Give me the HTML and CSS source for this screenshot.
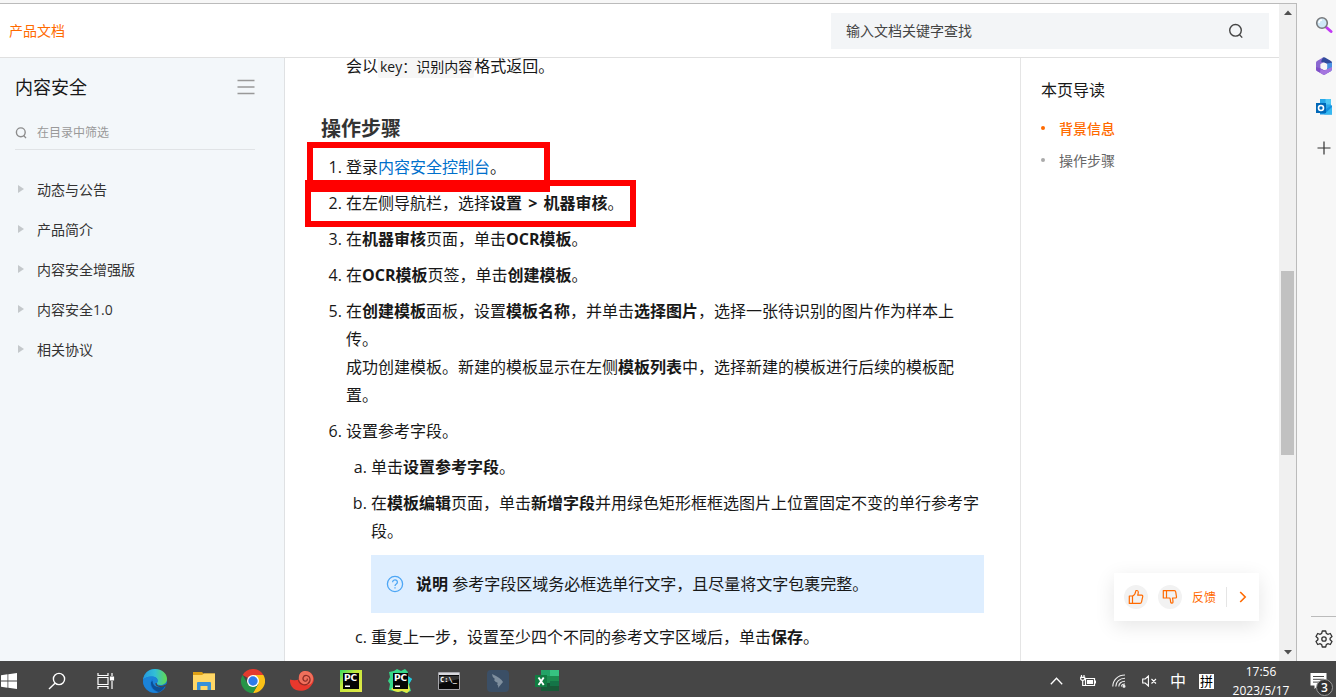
FILE: index.html
```html
<!DOCTYPE html>
<html lang="zh-CN">
<head>
<meta charset="utf-8">
<meta name="viewport" content="width=device-width, initial-scale=1">
<title>产品文档</title>
<link rel="stylesheet" href="styles.css">
</head>
<body>
<div class="browser">
  <div class="window">
    <div class="site">
      <header class="topbar">
        <a class="brand" href="#">产品文档</a>
        <form class="search">
          <input class="search-input" type="text" placeholder="输入文档关键字查找" aria-label="输入文档关键字查找">
          <button class="icon-btn" type="button" aria-label="搜索">
            <svg width="16" height="16" viewBox="0 0 16 16" fill="none" stroke="#444" stroke-width="1.4"><circle cx="7.5" cy="7.3" r="5.8"/><path d="M11.5 11.6l2.7 3"/></svg>
          </button>
        </form>
      </header>
      <div class="columns">
        <nav class="sidebar">
          <div class="side-head">
            <h2 class="side-title">内容安全</h2>
            <button class="icon-btn" type="button" aria-label="收起目录">
              <svg width="18" height="16" viewBox="0 0 18 16" fill="none" stroke="#999" stroke-width="1.6"><path d="M.5 1.500h17M.5 8h17M.5 14.500h17"/></svg>
            </button>
          </div>
          <label class="filter">
            <svg width="12" height="12" viewBox="0 0 12 12" fill="none" stroke="#8c8c8c" stroke-width="1.400"><circle cx="5.800" cy="5.300" r="4.400"/><path d="M8.800 8.600l2.200 2.500"/></svg>
            <input class="filter-input" type="text" placeholder="在目录中筛选" aria-label="在目录中筛选">
          </label>
          <ul class="menu">
            <li><a class="menu-link" href="#">动态与公告</a></li>
            <li><a class="menu-link" href="#">产品简介</a></li>
            <li><a class="menu-link" href="#">内容安全增强版</a></li>
            <li><a class="menu-link" href="#">内容安全1.0</a></li>
            <li><a class="menu-link" href="#">相关协议</a></li>
          </ul>
        </nav>
        <main class="article">
          <p class="lead">会以<code class="code">key：识别内容</code>格式返回。</p>
          <h2 class="heading">操作步骤</h2>
          <ol class="steps">
            <li class="marked">登录<a class="link" href="#">内容安全控制台</a>。<span class="frame frame-first"></span></li>
            <li class="marked">在左侧导航栏，选择<b>设置</b> <b class="then">&gt;</b> <b>机器审核</b>。<span class="frame frame-second"></span></li>
            <li>在<b>机器审核</b>页面，单击<b>OCR模板</b>。</li>
            <li>在<b>OCR模板</b>页签，单击<b>创建模板</b>。</li>
            <li>在<b>创建模板</b>面板，设置<b>模板名称</b>，并单击<b>选择图片</b>，选择一张待识别的图片作为样本上传。<br>成功创建模板。新建的模板显示在左侧<b>模板列表</b>中，选择新建的模板进行后续的模板配置。</li>
            <li>设置参考字段。
              <ol class="substeps">
                <li>单击<b>设置参考字段</b>。</li>
                <li>在<b>模板编辑</b>页面，单击<b>新增字段</b>并用绿色矩形框框选图片上位置固定不变的单行参考字段。
                  <div class="note">
                    <svg width="18" height="18" viewBox="0 0 18 18" fill="none" stroke="#4da6f5" stroke-width="1.300"><circle cx="9" cy="9" r="7.600"/><path d="M6.600 7.200a2.400 2.200 0 1 1 3.700 1.800c-.9.600-1.300.9-1.300 1.900M9 12.200v1.300"/></svg>
                    <p class="note-text"><b>说明</b> 参考字段区域务必框选单行文字，且尽量将文字包裹完整。</p>
                  </div>
                </li>
                <li>重复上一步，设置至少四个不同的参考文字区域后，单击<b>保存</b>。</li>
              </ol>
            </li>
          </ol>
        </main>
        <aside class="toc">
          <h3 class="toc-title">本页导读</h3>
          <ul class="toc-list">
            <li><a class="toc-link current" href="#">背景信息</a></li>
            <li><a class="toc-link" href="#">操作步骤</a></li>
          </ul>
        </aside>
      </div>
      <div class="feedback">
        <button class="round" type="button" aria-label="赞">
          <svg width="16" height="16" viewBox="0 0 16 16" fill="none" stroke="#ff6a00" stroke-width="1.200" stroke-linejoin="round"><path d="M1.300 7h3.200v7.400H1.300zM4.500 7.300c2-1 3-3 3.200-5 .1-1.200 2.600-1.200 2.600 1 0 1-.3 2-.6 2.900h4c.8 0 1.200.6 1 1.400l-1.200 5.600c-.2.800-.7 1.200-1.500 1.200H4.500"/></svg>
        </button>
        <button class="round" type="button" aria-label="踩">
          <svg width="16" height="16" viewBox="0 0 16 16" fill="none" stroke="#ff6a00" stroke-width="1.200" stroke-linejoin="round"><path d="M1.300 9h3.200V1.600H1.300zM4.500 9h3.300c.9 1.500.5 3 .9 4.300.4 1.400 2.300 1.100 2.300-.4 0-1.400-.2-2.300-.5-3.900h3c.7 0 1.100-.5 1-1.200l-.8-5c-.1-.8-.6-1.200-1.300-1.200H4.500"/></svg>
        </button>
        <a class="feedback-link" href="#">反馈</a>
        <button class="icon-btn divided" type="button" aria-label="展开">
          <svg width="8" height="12" viewBox="0 0 8 12" fill="none" stroke="#ff6a00" stroke-width="1.600"><path d="M1.200 1l5 5-5 5"/></svg>
        </button>
      </div>
    </div>
    <div class="scrollbar">
      <div class="arrow"><svg width="8" height="5" viewBox="0 0 8 5"><path d="M0 5L4 .5 8 5z" fill="#505050"/></svg></div>
      <div class="before"></div><div class="thumb"></div><div class="after"></div>
      <div class="arrow"><svg width="8" height="5" viewBox="0 0 8 5"><path d="M0 0l4 4.500L8 0z" fill="#505050"/></svg></div>
    </div>
  </div>
  <div class="rail">
    <button class="icon-btn" type="button" aria-label="搜索">
      <svg width="18" height="18" viewBox="0 0 18 18"><path d="M11.500 11.500l4.500 4" stroke="#c239f5" stroke-width="3" stroke-linecap="round"/><circle cx="7" cy="7" r="5.300" fill="#cfe8f7" stroke="#77797c" stroke-width="1.600"/><path d="M4 7a3 3 0 0 1 3-3" stroke="#fff" stroke-width="1.500" fill="none"/></svg>
    </button>
    <button class="icon-btn" type="button" aria-label="Microsoft 365">
      <svg width="18" height="18" viewBox="0 0 18 18"><path d="M8 .5L2 4q-1 .6-1 1.800v6.400Q1 13.400 2 14l3.500 2V7L12 3.500z" fill="#8a68d0"/><path d="M8 .5q1-.5 2 0L16 4q1 .6 1 1.800V10l-4.500-3L6 4.500z" fill="#314b9c"/><path d="M17 5.800v6.400q0 1.200-1 1.800l-4 2V6.500z" fill="#4a90e2"/><path d="M1 10l5 1.500 3 1.500 7 1-6 3.500q-1 .5-2 0L2 14q-1-.6-1-1.800z" fill="#8050c8"/><path d="M5.500 12L9 13.500 17 10v2.200q0 1.200-1 1.800l-6 3.500q-1 .5-2 0L5 15.700z" fill="#a576df"/><path d="M9 5.500l3.200 1.800v3.600L9 12.700l-3.200-1.800V7.300z" fill="#f7f7f7"/></svg>
    </button>
    <button class="icon-btn" type="button" aria-label="Outlook">
      <svg width="18" height="18" viewBox="0 0 18 18"><path d="M5 1h11v11H5z" fill="#28a8ea"/><path d="M10.500 1H16v5.500h-5.500z" fill="#50c8f5"/><path d="M5 7l6 4 6-4v9.500H5z" fill="#1490df"/><path d="M9 16.500L17 9v7.500z" fill="#35b8f1"/><path d="M1 5h10v10H1z" fill="#0068b8"/><circle cx="6" cy="10" r="2.500" fill="none" stroke="#fff" stroke-width="1.600"/></svg>
    </button>
    <button class="icon-btn" type="button" aria-label="添加">
      <svg width="14" height="14" viewBox="0 0 14 14" stroke="#333" stroke-width="1.200"><path d="M7 .5v13M.5 7h13"/></svg>
    </button>
    <button class="icon-btn rail-foot" type="button" aria-label="设置">
      <svg width="18" height="18" viewBox="0 0 18 18" fill="none" stroke="#333" stroke-width="1.300" stroke-linejoin="round"><path d="M7.300 1h3.400l.6 2.400 1.500.9 2.500-.8 1.700 3-1.900 1.700v1.600l1.900 1.700-1.700 3-2.500-.8-1.500.9-.6 2.400H7.300l-.6-2.400-1.500-.9-2.500.8-1.700-3 1.900-1.700V8.200L1 6.500l1.700-3 2.500.8 1.500-.9z"/><circle cx="9" cy="9" r="2.200"/></svg>
    </button>
  </div>
</div>
<footer class="taskbar">
  <button class="task task-start" type="button" aria-label="开始">
    <svg width="17" height="16" viewBox="0 0 17 16" fill="#fff"><path d="M1 2.200l6.500-.9v6.200H1zM8.300 1.200L17 0v7.500H8.300zM1 8.400h6.500v6.300L1 13.800zM8.300 8.400H17V16l-8.700-1.200z"/></svg>
  </button>
  <button class="task" type="button" aria-label="搜索">
    <svg width="18" height="18" viewBox="0 0 18 18" fill="none" stroke="#fff" stroke-width="1.400"><circle cx="11" cy="7" r="5.600"/><path d="M7 11.200L1 17"/></svg>
  </button>
  <button class="task" type="button" aria-label="任务视图">
    <svg width="18" height="16" viewBox="0 0 18 16" fill="none" stroke="#fff" stroke-width="1.200"><path d="M1 0v2.500h10V0M1 16v-2.500h10V16M1 4.500h10v7H1zM15 0v3M15 8v8"/><path d="M13.500 4h3v3h-3z" fill="#fff"/></svg>
  </button>
  <button class="task" type="button" aria-label="Edge">
    <svg width="24" height="24" viewBox="0 0 24 24"><defs><linearGradient id="sea" x1="0" x2="1"><stop offset="0" stop-color="#2499df"/><stop offset=".5" stop-color="#32bfd6"/><stop offset="1" stop-color="#62dc4d"/></linearGradient></defs><circle cx="12" cy="12" r="12" fill="#1474cf"/><path d="M0 11C.7 4.500 5.500 0 12 0c7 0 12 4.600 12 9.800 0 4-3 6.300-6.700 6.300-3 0-4-1.300-3.300-2.300 2.200-3-.5-6.300-5-6.300C4.500 7.500 1.200 9 0 11z" fill="url(#sea)"/><path d="M9.500 10C5 15 8 21 15 23.600 8 25 0 20 0 12c1-3 4.500-4.500 8.500-4.500 5 0 7 3.500 5.500 6.300-2 2.600 4 4.200 8.300 2-5 7-13 2.200-12.800-5.800z" fill="#1b83d8"/><path d="M8 13c-.3 5.500 3.500 9 8 10 3-1.200 5.300-4 6.400-6.700-4.500 3-13 2.800-12.800-4.300z" fill="#0c4f96"/><path d="M13.800 14c-1 2.600 4.200 4 8.600 1.800l1.600-1v3.700l-2.200-1.200c-4.500 1.700-9.800.4-9.300-3.300z" fill="#464646"/></svg>
  </button>
  <button class="task" type="button" aria-label="文件资源管理器">
    <svg width="22" height="18" viewBox="0 0 22 18"><path d="M0 0h9l1.500 1.500H22V18H0z" fill="#dea015"/><path d="M0 3h9l2-1.500h11V18H0z" fill="#ffd766"/><path d="M4 18v-7q0-1 1-1h12q1 0 1 1v7h-3.500v-4h-7v4z" fill="#3690d9"/></svg>
  </button>
  <button class="task" type="button" aria-label="Chrome">
    <svg width="24" height="24" viewBox="0 0 24 24"><path d="M12 12L1.600 6A12 12 0 0 1 22.400 6z" fill="#e33b2e"/><path d="M12 6h10.400A12 12 0 0 1 12 24l5.200-9z" fill="#fbc116"/><path d="M1.600 6A12 12 0 0 0 12 24l5.200-9H6.800z" fill="#269547"/><circle cx="12" cy="12" r="6" fill="#fff"/><circle cx="12" cy="12" r="4.700" fill="#2d7bea"/></svg>
  </button>
  <button class="task" type="button" aria-label="海螺">
    <svg width="24" height="20" viewBox="0 0 24 20"><path d="M0 8.500c3 1 6 1 9 0C8 3 12-.5 16.500.2 23 1 26 8 22 13.500c-3.500 6-11 7.500-16 5.500C2 17.500-.5 13 0 8.500z" fill="#e8382d"/><path d="M9 8.500C8 3 12-.5 16.500.2c5 .5 7.500 5 6.300 9.500-1 4-6 5.500-9.500 3.300-2-1-4-2.500-4.300-4.500z" fill="#f0705c"/><path d="M8.500 9c.5 4 5.500 6 9 4 4-2.500 3-8-.8-8.500-3.700-.4-5 4-2.200 5.500 2 .8 3.500-1 2.500-2.500" fill="none" stroke="#8c2c26" stroke-width="1.200"/></svg>
  </button>
  <button class="task" type="button" aria-label="PyCharm">
    <svg width="22" height="22" viewBox="0 0 22 22"><defs><linearGradient id="lime" x1="0" y1="0" x2="1" y2="1"><stop offset="0" stop-color="#31dc62"/><stop offset=".4" stop-color="#c4e83a"/><stop offset="1" stop-color="#e2e84a"/></linearGradient></defs><path d="M0 0h22v22H0z" fill="url(#lime)"/><path d="M3 3h16v16H3z" fill="#050505"/><text class="pc" x="4" y="11">PC</text><path d="M5 15.500h5V17H5z" fill="#fff"/></svg>
  </button>
  <button class="task" type="button" aria-label="PyCharm Community">
    <svg width="24" height="24" viewBox="0 0 24 24"><path d="M1 3l5-1 3-2 4 2 4-2 3 3-1 4 5 3-3 5 2 7-5 2-4-2-4 1-4-1-5-1 1-6-2-3 2-4z" fill="#35d889"/><path d="M20 7l4 3-3 5z" fill="#20c5e8"/><path d="M20 14l2 7-3 3-5-2-4 1-4-1-3-2 5-4z" fill="#e4e843"/><path d="M5 4h15v16H5z" fill="#050505"/><text class="pc" x="6" y="12">PC</text><path d="M7 16.500h5V18H7z" fill="#fff"/></svg>
  </button>
  <button class="task" type="button" aria-label="命令提示符">
    <svg width="22" height="18" viewBox="0 0 22 18"><path d="M.5.5h21v17H.5z" fill="#080808" stroke="#a5a5aa"/><path d="M1 1h20v2H1z" fill="#d8d8dd"/><path d="M1 4h20v3Q11 9 1 12z" fill="#333"/><text class="cmd" x="2" y="10">C:\_</text></svg>
  </button>
  <button class="task" type="button" aria-label="飞鸟">
    <svg width="22" height="22" viewBox="0 0 22 22"><rect width="22" height="22" rx="4" fill="#3b4f66"/><path d="M5 4q9 4 11 8l-5 6q1-2-1-4l1-1q-3-1-4-3l1-1q-3-2-3-5z" fill="#7f8f9e"/></svg>
  </button>
  <button class="task" type="button" aria-label="Excel">
    <svg width="24" height="22" viewBox="0 0 24 22"><path d="M6 0h18v21H6z" fill="#1c8d50"/><path d="M15 0h9v6h-9z" fill="#36c481"/><path d="M6 0h9v6H6z" fill="#23a366"/><path d="M15 11h9v5h-9z" fill="#147447"/><path d="M15 16h9v5h-9zM6 13h9v8H6z" fill="#175a37"/><path d="M0 5h12v12H0z" fill="#107c41"/><path d="M3.500 7.500l5.200 7.500M8.700 7.500L3.500 15" stroke="#fff" stroke-width="1.900"/></svg>
  </button>
  <div class="tray">
    <button class="tray-btn" type="button" aria-label="显示隐藏的图标"><svg width="13" height="8" viewBox="0 0 13 8" fill="none" stroke="#fff" stroke-width="1.300"><path d="M.8 7.200l5.700-6 5.700 6"/></svg></button>
    <button class="tray-btn" type="button" aria-label="电源"><svg width="16" height="12" viewBox="0 0 16 12" fill="none" stroke="#fff" stroke-width="1.200"><path d="M5.500 3.500h9v7h-9zM15.400 5.500v3M1.500 0v2M4 0v2M.7 2.300h4v2q-2 2-4 0zM2.700 5v5.500h3"/><path d="M7 5h6v4H7z" fill="#fff" stroke="none"/></svg></button>
    <button class="tray-btn" type="button" aria-label="网络"><svg width="14" height="14" viewBox="0 0 14 14" fill="none" stroke="#eee" stroke-width="1.100"><path d="M.8 12.500C.8 6 6 1 13 1M3.800 12.500C3.800 8 7.500 4.200 13 4.200M6.800 12.500c0-3 2.500-5.200 6.200-5.200M9.500 12.500c0-1.500 1.500-2.500 3.500-2.500"/><circle cx="12" cy="12.200" r="1" fill="#fff"/></svg></button>
    <button class="tray-btn" type="button" aria-label="静音"><svg width="15" height="12" viewBox="0 0 15 12" fill="none" stroke="#fff" stroke-width="1.100"><path d="M.7 4h2.500L6.400 1v10L3.200 8H.7zM9.500 4l4.500 4.500M14 4L9.500 8.500"/></svg></button>
    <button class="tray-btn ime" type="button">中</button>
    <button class="tray-btn" type="button"><span class="pinyin">拼</span></button>
    <time class="clock"><span>17:56</span><span>2023/5/17</span></time>
    <button class="notice" type="button" aria-label="通知">
      <svg width="17" height="16" viewBox="0 0 17 16"><path d="M.5 0H16.500v12.500H8L4.500 16v-3.500h-4z" fill="#fff"/><path d="M3 3.500h11M3 6.300h11M3 9.100h8" stroke="#464646"/></svg>
      <span class="badge">3</span>
    </button>
  </div>
</footer>
</body>
</html>
```
FILE: styles.css
```css
* { box-sizing: border-box; }

body {
  margin: 0;
  height: 100vh;
  display: flex;
  flex-direction: column;
  overflow: hidden;
  background: #f7f7f7;
  color: #181818;
  font-family: "Open Sans", "Noto Sans CJK SC", sans-serif;
  font-size: 14px;
}

h2, h3, p, ul, ol { margin: 0; padding: 0; }
ul { list-style: none; }
a { color: inherit; text-decoration: none; }
svg { display: block; flex: none; }
button, input { font: inherit; color: inherit; border: 0; padding: 0; background: none; outline: 0; }
button { display: flex; align-items: center; justify-content: center; }

.browser { flex: 1; min-height: 0; display: flex; }

.window {
  flex: 1;
  min-width: 0;
  display: flex;
  margin-top: 3px;
  border-top: 1px solid #bbb;
  border-right: 1px solid #bbb;
  background: #fff;
}

.site { flex: 1; min-width: 0; display: flex; flex-direction: column; position: relative; }

.topbar {
  display: flex;
  align-items: center;
  justify-content: space-between;
  height: 54px;
  padding: 0 10px 0 9px;
  border-bottom: 1px solid #e0e0e0;
}
.brand { color: #ff6a00; padding-bottom: 2px; }
.search {
  display: flex;
  width: 438px;
  height: 36px;
  padding: 0 25px 0 15px;
  background: #f3f5f7;
}
.search-input { flex: 1; min-width: 0; }
.search-input::placeholder { color: #444; opacity: 1; }

.columns { flex: 1; min-height: 0; display: flex; overflow: hidden; }

.sidebar {
  flex: none;
  width: 285px;
  padding: 14px 29px 0 15px;
  border-right: 1px solid #dfe1e3;
  background: #f3f7fa;
}
.side-head { display: flex; align-items: center; justify-content: space-between; height: 30px; }
.side-title { padding-bottom: 3px; font-size: 18px; font-weight: 400; }
.filter {
  display: flex;
  align-items: center;
  gap: 10px;
  height: 34px;
  margin-top: 14px;
  border-bottom: 1px solid #e0e3e6;
}
.filter-input { flex: 1; min-width: 0; font-size: 12px; }
.filter-input::placeholder { color: #999; opacity: 1; }
.menu { margin-top: 19px; }
.menu-link {
  display: flex;
  align-items: center;
  gap: 13px;
  height: 40px;
  padding-left: 3px;
  color: #333;
}
.menu-link::before {
  content: "";
  border-left: 6px solid #c4c8cb;
  border-top: 4px solid transparent;
  border-bottom: 4px solid transparent;
}

.article {
  flex: 1;
  min-width: 0;
  padding: 0 36px;
  font-size: 16px;
  line-height: 28px;
}
.lead { margin-top: -6px; padding-left: 25px; }
.code {
  padding: 2px;
  border-radius: 2px;
  background: #f6f6f6;
  font-family: inherit;
  font-size: 14px;
}
.heading { margin-top: 34px; color: #333; font-size: 20px; line-height: 28px; }
.steps { display: flex; flex-direction: column; gap: 8px; margin-top: 10px; padding-left: 25px; }
.substeps { display: flex; flex-direction: column; gap: 8px; margin-top: 8px; padding-left: 25px; list-style: lower-alpha; }
.link { color: #0070cc; }
.then { margin: 0 2px; }
.marked { position: relative; }
.frame { position: absolute; border: 6px solid #f00; }
.frame-first { left: -39px; top: -11px; width: 243px; height: 50px; }
.frame-second { left: -41px; top: -9px; width: 331px; height: 47px; }
.note {
  display: flex;
  align-items: center;
  gap: 12px;
  height: 58px;
  margin: 10px 0 2px;
  padding: 0 15px;
  background: #deeeff;
}

.toc { flex: none; width: 259px; padding: 20px; border-left: 1px solid #e5e5e5; }
.toc-title { font-size: 16px; font-weight: 400; line-height: 24px; }
.toc-list { margin-top: 10px; }
.toc-link { display: flex; align-items: center; gap: 14px; height: 32px; color: #666; }
.toc-link::before { content: ""; width: 4px; height: 4px; border-radius: 50%; background: #aaa; }
.toc-link.current { color: #ff6a00; font-weight: 500; }
.toc-link.current::before { background: #ff6a00; }

.feedback {
  position: absolute;
  right: 20px;
  bottom: 40px;
  display: flex;
  align-items: center;
  height: 48px;
  padding: 0 12px 0 10px;
  background: #fff;
  box-shadow: 0 5px 20px rgba(0, 0, 0, 0.1);
}
.round { width: 24px; height: 24px; margin-right: 10px; border-radius: 50%; background: #f2f2f2; }
.feedback-link { color: #ff6a00; font-size: 12px; }
.divided { height: 20px; margin-left: 10px; padding-left: 12px; border-left: 1px solid #e5e5e5; }

.scrollbar { flex: none; width: 17px; display: flex; flex-direction: column; background: #f0f0f0; }
.arrow { height: 17px; display: flex; align-items: center; justify-content: center; }
.before { flex: 250; }
.thumb { flex: 184; margin: 0 2px; background: #c1c1c1; }
.after { flex: 189; }

.rail {
  flex: none;
  width: 39px;
  display: flex;
  flex-direction: column;
  padding: 4px 0 0 14px;
}
.rail .icon-btn { height: 41px; }
.rail .rail-foot { height: 45px; margin-top: auto; border-top: 1px solid #bbb; }

.taskbar {
  flex: none;
  display: flex;
  height: 36px;
  overflow: hidden;
  background: #464646;
  color: #fff;
}
.task { flex: none; width: 49px; height: 40px; }
.task-start { width: 32px; padding-right: 15px; }
.pc { fill: #fff; font: bold 9px "DejaVu Sans", sans-serif; }
.cmd { fill: #fff; font: bold 7px "DejaVu Sans Mono", monospace; }

.tray { display: flex; height: 40px; margin-left: auto; }
.tray-btn { width: 31px; height: 40px; }
.ime { width: 26px; padding-bottom: 2px; font-size: 16px; }
.pinyin { width: 15px; height: 15px; background: #fff; color: #000; font-size: 13px; line-height: 15px; }
.clock {
  display: flex;
  flex-direction: column;
  align-items: center;
  width: 78px;
  padding-top: 1px;
  font-size: 12px;
  line-height: 19px;
}
.notice { position: relative; width: 36px; height: 40px; }
.badge {
  position: absolute;
  left: 16px;
  top: 18px;
  width: 17px;
  height: 17px;
  border: 1px solid #999;
  border-radius: 50%;
  background: #333;
  font-size: 12px;
  font-weight: 600;
  line-height: 15px;
}
```
